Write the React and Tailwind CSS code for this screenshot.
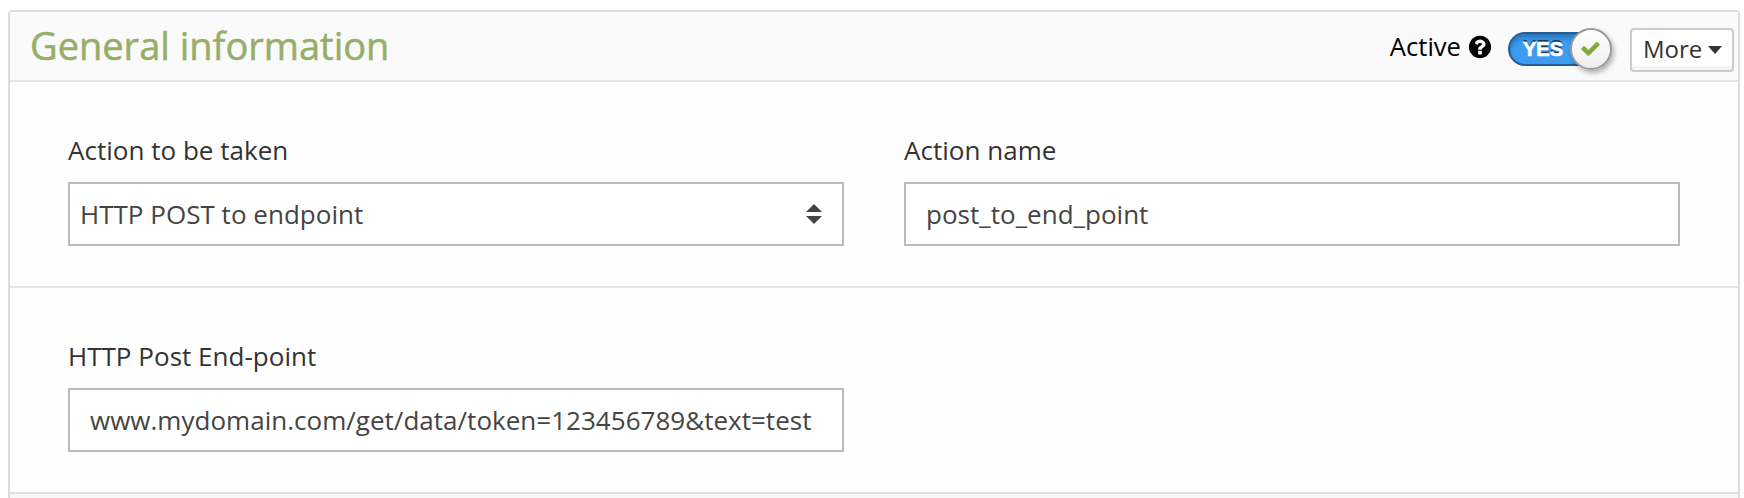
const labelText = "text-[26px] leading-[36px] tracking-[0.02px] text-[#333]";
const field = "flex h-16 items-center border-2 border-[#bbb] bg-white text-[26px] tracking-[0.02px] text-[#444]";

function HelpIcon() {
  return (
    <svg className="h-[26px] w-[26px]" viewBox="0 0 1792 1792" fill="currentColor">
      <path d="M1024 1376v-192q0-14-9-23t-23-9h-192q-14 0-23 9t-9 23v192q0 14 9 23t23 9h192q14 0 23-9t9-23zm256-672q0-88-55.5-163t-138.5-116-170-41q-243 0-371 213-15 24 8 42l132 100q7 6 19 6 16 0 25-12 53-68 86-92 34-24 86-24 48 0 85.5 26t37.5 59q0 38-20 61t-68 45q-63 28-115.5 86.5t-52.5 125.5v36q0 14 9 23t23 9h192q14 0 23-9t9-23q0-19 21.5-49.5t54.5-49.5q32-18 49-28.5t46-35 44.5-48 28-60.5 12.5-81zm384 192q0 209-103 385.5t-279.5 279.5-385.5 103-385.5-103-279.5-279.5-103-385.5 103-385.5 279.5-279.5 385.5-103 385.5 103 279.5 279.5 103 385.5z" />
    </svg>
  );
}

function CheckIcon() {
  return (
    <svg className="mr-px h-[21px] w-[21px]" viewBox="0 0 1792 1792" fill="#82ab3c">
      <path d="M1671 566q0 40-28 68l-724 724-136 136q-28 28-68 28t-68-28l-136-136-362-362q-28-28-28-68t28-68l136-136q28-28 68-28t68 28l294 295 656-657q28-28 68-28t68 28l136 136q28 28 28 68z" />
    </svg>
  );
}

function Toggle() {
  return (
    <div className="relative mt-5 ml-[15px] h-[34px] w-[102px]">
      <div className="h-[34px] w-[100px] rounded-full border-2 border-[#255f95] bg-[#3d9cf2] pl-[13px] font-['Liberation_Sans',sans-serif] text-[20px] leading-[30px] font-bold text-white shadow-[inset_0_4px_5px_rgba(0,0,0,0.25)] [-webkit-text-stroke:0.7px_white] [text-shadow:0_-2px_0_rgba(0,0,0,0.6)]">
        YES
      </div>
      <div className="absolute top-[-4px] right-[-2px] flex h-[42px] w-[42px] items-center justify-center rounded-full border-2 border-[#999] bg-linear-to-b from-white to-[#eee] pb-px shadow-[2px_3px_5px_rgba(0,0,0,0.3)]">
        <CheckIcon />
      </div>
    </div>
  );
}

export default function App() {
  return (
    <div className="h-[498px] overflow-hidden bg-white pt-[10px] pr-1 pl-2 font-['Open_Sans',sans-serif]">
      <section className="h-[510px] rounded-[4px] border-2 border-[#ddd] bg-[#fefefe]">
        <header className="flex h-[70px] justify-between border-b-2 border-[#e5e5e5] bg-[#fafafa] pr-1 pl-5">
          <h1 className="pt-[6px] text-[38px] leading-[54px] text-[#96ae67] [-webkit-text-stroke:0.5px_#96ae67]">General information</h1>
          <div className="flex items-start">
            <span className="mt-[17px] text-[25.6px] leading-[36px] text-black">Active</span>
            <span className="mt-[22px] ml-[6px]"><HelpIcon /></span>
            <Toggle />
            <button className="mt-4 ml-5 flex h-11 w-[104px] items-center rounded-[4px] border-2 border-[#ccc] bg-white pl-[11px] text-[#333] shadow-[inset_0_-4px_0_#f3f3f3]">
              <span className="-mt-[2px] text-[24px] leading-[36px]">More</span>
              <svg className="ml-[6px] h-2 w-[14px]" viewBox="0 0 14 8" fill="#333">
                <path d="M0 0h14L7 8z" />
              </svg>
            </button>
          </div>
        </header>

        <div className="grid h-[206px] grid-cols-[776px_776px] gap-[60px] border-b-2 border-[#e5e5e5] px-[58px] pt-[50px]">
          <div>
            <div className={labelText}>Action to be taken</div>
            <div className={field + " mt-[14px] justify-between pr-5 pl-[10px]"}>
              HTTP POST to endpoint
              <svg className="h-5 w-4" viewBox="0 0 16 20" fill="#444">
                <path d="M0 8L8 0l8 8zM0 12h16l-8 8z" />
              </svg>
            </div>
          </div>
          <div>
            <div className={labelText}>Action name</div>
            <div className={field + " mt-[14px] pl-5"}>post_to_end_point</div>
          </div>
        </div>

        <div className="h-[206px] border-b-2 border-[#e0e0e0] px-[58px] pt-[50px]">
          <div className={labelText}>HTTP Post End-point</div>
          <div className={field + " mt-[14px] w-[776px] pl-5"}>
            www.mydomain.com/get/data/token=123456789&amp;text=test
          </div>
        </div>
        <div className="h-6 bg-[#f8f8f8]" />
      </section>
    </div>
  );
}
